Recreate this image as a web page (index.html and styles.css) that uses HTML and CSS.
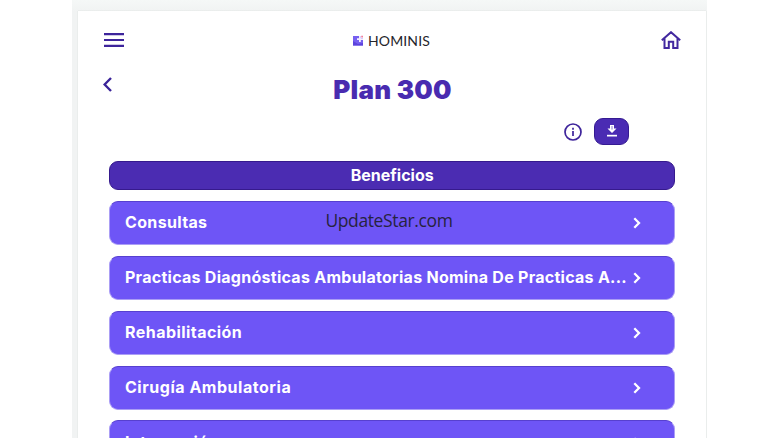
FILE: index.html
```html
<!DOCTYPE html>
<html lang="es">
<head>
<meta charset="utf-8">
<title>Plan 300</title>
<link rel="stylesheet" href="styles.css">
</head>
<body>
<div class="backdrop">
  <main class="panel">
    <header class="topbar">
      <svg class="menu" viewBox="0 0 20 14"><path d="M0 1.2h20M0 7h20M0 12.8h20"/></svg>
      <div class="brand">
        <svg class="logo" viewBox="0 0 11 11"><path d="M0 1h10v9.5H0z" fill="#765ff0"/><path d="M0 6l5 3 5-1v2.5H0z" fill="#5b43dc"/><path d="M6 1h1.8v2.2H10V5H7.8v2H6V5H4V3.2h2z" fill="#f4eeff"/><path d="M8 0h3v3H8z" fill="#fff"/><path d="M8.2.8h1.8v1.8H8.2z" fill="#f0809d"/></svg>
        <span class="brand-name">HOMINIS</span>
      </div>
      <svg class="home" viewBox="0 0 20 18"><path d="M.8 9.3L10 1.2l9.2 8.1M3.5 7.5V17h4.3v-6.3h4.4V17h4.3V7.5"/></svg>
    </header>
    <div class="title-row">
      <svg class="back" viewBox="0 0 9 15"><path d="M8 1L1.6 7.5 8 14"/></svg>
      <h1 class="title"><span>Plan 300</span></h1>
    </div>
    <div class="actions">
      <svg class="info" viewBox="0 0 18 18"><circle cx="9" cy="9" r="8"/><path d="M9 8v5M9 4.8v1.9"/></svg>
      <button class="download" type="button"><svg viewBox="0 0 10 12"><path d="M3 0h4v3.6h2.5L5 8 .5 3.6H3z"/><path class="slot" d="M5 1v3.6"/><path d="M0 9.8h10v1.7H0z"/></svg></button>
    </div>
    <section class="benefits">
      <h2 class="heading"><span>Beneficios</span></h2>
      <div class="item"><span class="label consultas">Consultas</span><svg class="chevron" viewBox="0 0 8 12"><path d="M1.3 1.3L6 6l-4.7 4.7"/></svg><span class="watermark">UpdateStar.com</span></div>
      <div class="item"><span class="label practicas">Practicas Diagnósticas Ambulatorias Nomina De Practicas A...</span><svg class="chevron" viewBox="0 0 8 12"><path d="M1.3 1.3L6 6l-4.7 4.7"/></svg></div>
      <div class="item"><span class="label rehab">Rehabilitación</span><svg class="chevron" viewBox="0 0 8 12"><path d="M1.3 1.3L6 6l-4.7 4.7"/></svg></div>
      <div class="item"><span class="label cirugia">Cirugía Ambulatoria</span><svg class="chevron" viewBox="0 0 8 12"><path d="M1.3 1.3L6 6l-4.7 4.7"/></svg></div>
      <div class="item"><span class="label rehab">Internación</span><svg class="chevron" viewBox="0 0 8 12"><path d="M1.3 1.3L6 6l-4.7 4.7"/></svg></div>
    </section>
  </main>
</div>
</body>
</html>
```
FILE: styles.css
```css
* { box-sizing: border-box; }
body { margin: 0; height: 438px; overflow: hidden; background: #fff; font-family: Inter, Poppins, sans-serif; }
svg { display: block; flex: none; fill: none; }
.backdrop { width: 635px; height: 438px; margin-left: 72px; padding: 11px 1px 0 6px; overflow: hidden; background: linear-gradient(#f5f8f7, #f1f3f3 11px); }
.panel { height: 440px; background: #fff; box-shadow: 0 0 1px #c9cccb; }
.topbar { height: 58px; padding: 0 25px 0 26px; display: flex; align-items: center; justify-content: space-between; }
.menu { width: 20px; height: 14px; stroke: #3d249b; stroke-width: 2.2; }
.brand { display: flex; align-items: center; gap: 4px; margin-right: 2px; }
.logo { width: 11px; height: 11px; }
.brand-name { padding-top: 1px; font: 400 14px/16px Lato, sans-serif; letter-spacing: .15px; color: #25252b; }
.home { width: 20px; height: 18px; stroke: #42289f; stroke-width: 2; }
.title-row { height: 38px; display: flex; padding-left: 25px; }
.back { width: 9px; height: 15px; margin-top: 8px; stroke: #3a2399; stroke-width: 2.4; }
.title { flex: 1; margin: 0 33px 0 0; padding-top: 5px; text-align: center; color: #492bb0; font-size: 26px; font-weight: 900; line-height: 32px; letter-spacing: .2px; }
.actions { height: 54px; padding: 11px 77px 0 0; display: flex; justify-content: flex-end; align-items: flex-start; gap: 12px; }
.info { width: 18px; height: 18px; margin-top: 5px; stroke: #3e249b; stroke-width: 1.7; }
.download { width: 35px; height: 27px; padding: 0; border: 1px solid #351b92; border-radius: 9px; background: #4a2bb3; display: flex; align-items: center; justify-content: center; }
.download svg { width: 10px; height: 12px; margin-top: -1px; fill: #fff; }
.slot { stroke: #8d78d3; stroke-width: 1; }
.benefits { padding: 0 31px 0 31.4px; }
.heading { height: 29.4px; margin: 0 0 10.8px; border: 1px solid #361a8d; border-radius: 9px; background: #4b2cb2; color: #fff; font-size: 16px; font-weight: 700; line-height: 27px; text-align: center; }
.item { position: relative; height: 44.3px; margin-bottom: 10.5px; padding: 0 34px 0 14.6px; display: flex; align-items: center; justify-content: space-between; border: 1px solid #ab9ef5; border-top-color: #5740cf; border-radius: 9px; background: #6e55f6; color: #fff; }
.label { padding-bottom: 2px; font-size: 16px; font-weight: 650; line-height: 22px; white-space: nowrap; }
.consultas { letter-spacing: .35px; }
.practicas { letter-spacing: .27px; }
.rehab { letter-spacing: .45px; }
.cirugia { letter-spacing: .53px; }
.chevron { width: 8px; height: 12px; margin-right: -1px; stroke: #fff; stroke-width: 2.3; }
.watermark { position: absolute; left: 215px; top: 6px; color: #27233f; font: 400 17.5px/24px "Open Sans", sans-serif; letter-spacing: -.38px; }
```
